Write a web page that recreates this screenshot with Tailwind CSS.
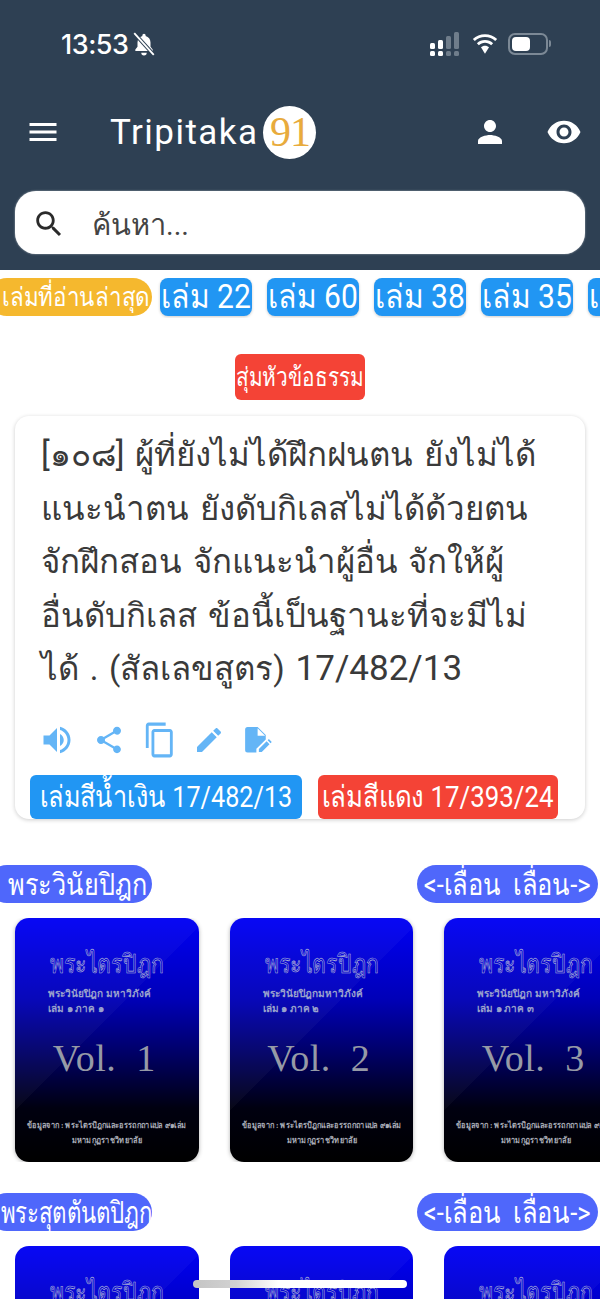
<!DOCTYPE html>
<html lang="th">
<head>
<meta charset="utf-8">
<script src="https://cdn.jsdelivr.net/npm/@tailwindcss/browser@4"></script>
</head>
<body>
<div class="relative w-[600px] h-[1299px] overflow-hidden bg-white font-['Roboto','Noto_Sans',sans-serif]">
  <header class="bg-[#2e4053] h-[270px] text-white flex flex-col">
    <div class="h-[88px] flex items-center pl-[61px] pr-[52px]">
      <span class="font-['Inter',sans-serif] font-medium text-[27px] leading-none tracking-[-0.5px]">13:53</span>
      <svg class="w-[26px] h-[26px] ml-[3px]" viewBox="0 0 24 24"><path fill="#fff" d="M12 2.500c-.8 0-1.500.7-1.500 1.500v.5C7.800 5.200 6 7.600 6 10.500v4L4 17v1.500h16V17l-2-2.500v-4c0-2.900-1.800-5.300-4.500-6v-.5c0-.8-.7-1.500-1.500-1.500zM9.500 20a2.500 2.500 0 0 0 5 0z"/><path d="M3 2l18 20" stroke="#2e4053" stroke-width="3.500"/><path d="M3 2l18 20" stroke="#fff" stroke-width="1.700"/></svg>
      <div class="ml-auto flex items-center">
        <svg class="w-[32px] h-[24px]" viewBox="0 0 32 24"><g fill="#fff"><rect x="1" y="11" width="5" height="6" rx="1.500"/><rect x="1" y="19" width="5" height="5" rx="1.500"/><rect x="9" y="8" width="5" height="9" rx="1.500"/><rect x="9" y="19" width="5" height="5" rx="1.500"/></g><g fill="#6f7d8b"><rect x="17" y="4" width="5" height="13" rx="1.500"/><rect x="17" y="19" width="5" height="5" rx="1.500"/><rect x="25" y="0" width="5" height="17" rx="1.500"/><rect x="25" y="19" width="5" height="5" rx="1.500"/></g></svg>
        <svg class="w-[28px] h-[22px] ml-[10px]" viewBox="0 0 24 19" fill="#fff"><path d="M12 3.500c3.400 0 6.500 1.300 8.800 3.500l1.700-1.800C19.700 2.600 16 1 12 1S4.300 2.600 1.500 5.200L3.200 7c2.300-2.200 5.400-3.500 8.800-3.500z"/><path d="M12 8.500c2 0 3.900.8 5.300 2.100l1.700-1.800C17.100 7 14.700 6 12 6S6.900 7 5 8.800l1.700 1.800C8.100 9.300 10 8.500 12 8.500z"/><path d="M12 11c-1.400 0-2.600.5-3.500 1.400L12 18l3.500-5.600c-.9-.9-2.100-1.400-3.500-1.400z"/></svg>
        <div class="ml-[9px] w-[40px] h-[22px] rounded-[7px] border-2 border-[#7c8996] p-[2px] relative">
          <div class="w-[18px] h-full bg-white rounded-[4px]"></div>
          <div class="absolute right-[-5px] top-[5px] w-[2px] h-[7px] bg-[#7c8996] rounded-r"></div>
        </div>
      </div>
    </div>
    <div class="h-[88px] flex items-center pl-[25px] pr-[18px]">
      <svg class="w-[36px] h-[36px]" viewBox="0 0 24 24" fill="#fff"><path d="M3 18h18v-2H3v2zm0-5h18v-2H3v2zm0-7v2h18V6H3z"/></svg>
      <span class="ml-[49px] text-[35px] leading-none tracking-[1.45px]">Tripitaka</span>
      <div class="ml-[5px] w-[53px] h-[53px] rounded-full bg-white flex items-center justify-center text-[#e8ab3c] font-['Liberation_Serif',serif] text-[42px] leading-none tracking-[-1px]">91</div>
      <svg class="ml-auto w-[36px] h-[36px]" viewBox="0 0 24 24" fill="#fff"><path d="M12 12c2.210 0 4-1.790 4-4s-1.790-4-4-4-4 1.790-4 4 1.790 4 4 4zm0 2c-2.670 0-8 1.340-8 4v2h16v-2c0-2.660-5.330-4-8-4z"/></svg>
      <svg class="ml-[38px] w-[36px] h-[36px]" viewBox="0 0 24 24" fill="#fff"><path d="M12 4.500C7 4.500 2.730 7.610 1 12c1.730 4.390 6 7.500 11 7.500s9.270-3.110 11-7.500c-1.730-4.390-6-7.500-11-7.500zM12 17c-2.760 0-5-2.240-5-5s2.240-5 5-5 5 2.240 5 5-2.240 5-5 5zm0-8c-1.660 0-3 1.340-3 3s1.340 3 3 3 3-1.340 3-3-1.340-3-3-3z"/></svg>
    </div>
    <div class="mx-[15px] mt-[15px] h-[63px] bg-white rounded-[21px] flex items-center pl-[17px] shadow-[0_0_2px_rgba(255,255,255,0.6)]">
      <svg class="w-[34px] h-[34px] mt-[2px]" viewBox="0 0 24 24" fill="#2a2a2a"><path d="M15.500 14h-.790l-.280-.270C15.410 12.590 16 11.110 16 9.500 16 5.910 13.090 3 9.500 3S3 5.910 3 9.500 5.910 16 9.500 16c1.610 0 3.090-.590 4.230-1.570l.270.280v.790l5 4.990L20.490 19l-4.990-5zm-6 0C7.010 14 5 11.990 5 9.500S7.010 5 9.500 5 14 7.010 14 9.500 11.990 14 9.500 14z"/></svg>
      <span class="ml-[26px] mt-[5px] text-[29px] leading-none text-[#444]">ค้นหา...</span>
    </div>
  </header>

  <div class="mt-[8px] flex overflow-hidden h-[40px] gap-[15px] text-white">
    <div class="-ml-[12px] mr-[-7px] w-[164px] h-[38px] shrink-0 rounded-full bg-[#f5b82e] text-[26px] flex items-center justify-center pl-[12px] whitespace-nowrap"><span class="inline-block shrink-0 scale-x-[0.86]">เล่มที่อ่านล่าสุด</span></div>
    <div class="w-[92px] h-[38px] shrink-0 rounded-[8px] bg-[#2196f3] text-[33px] flex items-center justify-center shadow-[0_1px_3px_rgba(0,0,0,0.2)] whitespace-nowrap"><span class="inline-block shrink-0 scale-x-[0.91]">เล่ม 22</span></div>
    <div class="w-[92px] h-[38px] shrink-0 rounded-[8px] bg-[#2196f3] text-[33px] flex items-center justify-center shadow-[0_1px_3px_rgba(0,0,0,0.2)] whitespace-nowrap"><span class="inline-block shrink-0 scale-x-[0.91]">เล่ม 60</span></div>
    <div class="w-[92px] h-[38px] shrink-0 rounded-[8px] bg-[#2196f3] text-[33px] flex items-center justify-center shadow-[0_1px_3px_rgba(0,0,0,0.2)] whitespace-nowrap"><span class="inline-block shrink-0 scale-x-[0.91]">เล่ม 38</span></div>
    <div class="w-[92px] h-[38px] shrink-0 rounded-[8px] bg-[#2196f3] text-[33px] flex items-center justify-center shadow-[0_1px_3px_rgba(0,0,0,0.2)] whitespace-nowrap"><span class="inline-block shrink-0 scale-x-[0.91]">เล่ม 35</span></div>
    <div class="w-[92px] h-[38px] shrink-0 rounded-[8px] bg-[#2196f3] text-[33px] flex items-center justify-center shadow-[0_1px_3px_rgba(0,0,0,0.2)] whitespace-nowrap"><span class="inline-block shrink-0 scale-x-[0.91]">เล่ม 11</span></div>
  </div>

  <div class="mt-[36px] mx-auto w-[130px] h-[46px] rounded-[6px] bg-[#f44336] text-white text-[26px] flex items-center justify-center whitespace-nowrap"><span class="inline-block shrink-0 scale-x-[0.8]">สุ่มหัวข้อธรรม</span></div>

  <section class="mt-[16px] mx-[15px] h-[403px] rounded-[14px] bg-white shadow-[0_1px_4px_rgba(0,0,0,0.2)] flex flex-col">
    <p class="mt-[12px] ml-[26px] text-[33px] leading-[53.500px] text-[#3a3a3a] whitespace-nowrap [word-spacing:2.500px]">[๑๐๘] ผู้ที่ยังไม่ได้ฝึกฝนตน ยังไม่ได้<br>แนะนำตน ยังดับกิเลสไม่ได้ด้วยตน<br>จักฝึกสอน จักแนะนำผู้อื่น จักให้ผู้<br>อื่นดับกิเลส ข้อนี้เป็นฐานะที่จะมีไม่<br>ได้ . (สัลเลขสูตร) <span class="text-[35px]">17/482/13</span></p>
    <div class="mt-[26px] ml-[24px] flex items-center h-[36px]">
      <svg class="w-[36px] h-[36px]" viewBox="0 0 24 24" fill="#64b5f6"><path d="M3 9v6h4l5 5V4L7 9H3zm13.500 3c0-1.770-1.020-3.290-2.500-4.030v8.050c1.480-.730 2.500-2.250 2.500-4.020zM14 3.230v2.060c2.890.860 5 3.540 5 6.710s-2.110 5.850-5 6.710v2.060c4.010-.910 7-4.490 7-8.770s-2.990-7.860-7-8.770z"/></svg>
      <svg class="ml-[18px] w-[32px] h-[32px]" viewBox="0 0 24 24" fill="#64b5f6"><path d="M18 16.080c-.760 0-1.440.300-1.960.770L8.910 12.700c.050-.230.090-.460.090-.700s-.040-.470-.090-.700l7.050-4.110c.540.500 1.250.810 2.040.810 1.660 0 3-1.340 3-3s-1.340-3-3-3-3 1.340-3 3c0 .240.040.470.090.700L8.040 9.810C7.500 9.310 6.790 9 6 9c-1.660 0-3 1.340-3 3s1.340 3 3 3c.790 0 1.500-.310 2.040-.810l7.120 4.160c-.050.210-.080.430-.080.650 0 1.610 1.310 2.920 2.920 2.920 1.610 0 2.920-1.310 2.920-2.920s-1.310-2.920-2.920-2.920z"/></svg>
      <svg class="ml-[18px] w-[34px] h-[38px]" viewBox="0 0 24 24" fill="#64b5f6" preserveAspectRatio="none"><path d="M16 1H4c-1.100 0-2 .9-2 2v14h2V3h12V1zm3 4H8c-1.100 0-2 .9-2 2v14c0 1.100.9 2 2 2h11c1.100 0 2-.9 2-2V7c0-1.100-.9-2-2-2zm0 16H8V7h11v14z"/></svg>
      <svg class="ml-[16px] w-[32px] h-[32px]" viewBox="0 0 24 24" fill="#64b5f6"><path d="M3 17.250V21h3.750L17.810 9.940l-3.750-3.750L3 17.250zM20.710 7.040c.390-.390.390-1.020 0-1.410l-2.340-2.340c-.390-.390-1.020-.390-1.410 0l-1.830 1.830 3.750 3.750 1.830-1.830z"/></svg>
      <svg class="ml-[17px] w-[30px] h-[32px]" viewBox="0 0 24 24" fill="#64b5f6"><path d="M4.500 1.500h8l6.500 6.500v3.500l-7.500 7.500v3H4.500a2 2 0 0 1-2-2v-16.500a2 2 0 0 1 2-2z"/><path fill="#fff" d="M12.500 2.500v6h6z"/><path d="M13.500 21.500v-2.300l6.200-6.200 2.300 2.300-6.200 6.200zM20.500 12.200l1-1 2.300 2.300-1 1z"/></svg>
    </div>
    <div class="mt-[17px] ml-[15px] flex gap-[16px] text-white text-[30px]">
      <div class="w-[272px] h-[44px] rounded-[6px] bg-[#2196f3] flex items-center justify-center whitespace-nowrap"><span class="inline-block shrink-0 scale-x-[0.84]">เล่มสีน้ำเงิน 17/482/13</span></div>
      <div class="w-[240px] h-[44px] rounded-[6px] bg-[#f44336] flex items-center justify-center whitespace-nowrap"><span class="inline-block shrink-0 scale-x-[0.86]">เล่มสีแดง 17/393/24</span></div>
    </div>
  </section>

  <section class="mt-[46px]">
    <div class="flex justify-between pr-[2px] text-white text-[30px]">
      <div class="-ml-[12px] w-[164px] h-[38px] rounded-full bg-[#4f67fb] flex items-center justify-center pl-[14px] whitespace-nowrap"><span class="inline-block shrink-0 scale-x-[0.84]">พระวินัยปิฎก</span></div>
      <div class="w-[181px] h-[38px] rounded-full bg-[#4f67fb] flex items-center justify-center whitespace-nowrap"><span class="inline-block shrink-0 scale-x-[0.85]">&lt;-เลื่อน&nbsp; เลื่อน-&gt;</span></div>
    </div>
    <div class="mt-[15px] pl-[15px] flex gap-[31px] overflow-hidden">
      <article class="w-[183.500px] h-[244px] shrink-0 rounded-[14px] overflow-hidden bg-[linear-gradient(135deg,rgba(255,255,255,0.03)_45%,transparent_45%),linear-gradient(to_bottom,#0000f5_0%,#0000b8_33%,#000068_55%,#000010_78%,#000_100%)] shadow-[0_1px_4px_rgba(0,0,0,0.3)] font-['Liberation_Serif',serif] text-center text-[#9aa2cc]">
        <div class="mt-[30px] text-[26px] leading-[34px] scale-x-[0.82] text-transparent [-webkit-text-stroke:0.6px_#b4bad8]">พระไตรปิฎก</div>
        <div class="mt-[4px] ml-[33px] text-left text-[10px] leading-[15px] font-bold whitespace-nowrap">พระวินัยปิฎก มหาวิภังค์<br>เล่ม ๑ ภาค ๑</div>
        <div class="mt-[20px] -ml-[5px] text-[38px] leading-[44px] tracking-[0.5px] text-[#969aa6] whitespace-pre">Vol.  1</div>
        <div class="mt-[38px] text-[8.500px] leading-[15px] font-bold text-[#a9acb6] whitespace-nowrap scale-x-[0.87]">ข้อมูลจาก : พระไตรปิฎกและอรรถกถาแปล ๙๑เล่ม<br>มหามกุฏราชวิทยาลัย</div>
      </article>
      <article class="w-[183.500px] h-[244px] shrink-0 rounded-[14px] overflow-hidden bg-[linear-gradient(135deg,rgba(255,255,255,0.03)_45%,transparent_45%),linear-gradient(to_bottom,#0000f5_0%,#0000b8_33%,#000068_55%,#000010_78%,#000_100%)] shadow-[0_1px_4px_rgba(0,0,0,0.3)] font-['Liberation_Serif',serif] text-center text-[#9aa2cc]">
        <div class="mt-[30px] text-[26px] leading-[34px] scale-x-[0.82] text-transparent [-webkit-text-stroke:0.6px_#b4bad8]">พระไตรปิฎก</div>
        <div class="mt-[4px] ml-[33px] text-left text-[10px] leading-[15px] font-bold whitespace-nowrap">พระวินัยปิฎกมหาวิภังค์<br>เล่ม ๑ ภาค ๒</div>
        <div class="mt-[20px] -ml-[5px] text-[38px] leading-[44px] tracking-[0.5px] text-[#969aa6] whitespace-pre">Vol.  2</div>
        <div class="mt-[38px] text-[8.500px] leading-[15px] font-bold text-[#a9acb6] whitespace-nowrap scale-x-[0.87]">ข้อมูลจาก : พระไตรปิฎกและอรรถกถาแปล ๙๑เล่ม<br>มหามกุฏราชวิทยาลัย</div>
      </article>
      <article class="w-[183.500px] h-[244px] shrink-0 rounded-[14px] overflow-hidden bg-[linear-gradient(135deg,rgba(255,255,255,0.03)_45%,transparent_45%),linear-gradient(to_bottom,#0000f5_0%,#0000b8_33%,#000068_55%,#000010_78%,#000_100%)] shadow-[0_1px_4px_rgba(0,0,0,0.3)] font-['Liberation_Serif',serif] text-center text-[#9aa2cc]">
        <div class="mt-[30px] text-[26px] leading-[34px] scale-x-[0.82] text-transparent [-webkit-text-stroke:0.6px_#b4bad8]">พระไตรปิฎก</div>
        <div class="mt-[4px] ml-[33px] text-left text-[10px] leading-[15px] font-bold whitespace-nowrap">พระวินัยปิฎก มหาวิภังค์<br>เล่ม ๑ ภาค ๓</div>
        <div class="mt-[20px] -ml-[5px] text-[38px] leading-[44px] tracking-[0.5px] text-[#969aa6] whitespace-pre">Vol.  3</div>
        <div class="mt-[38px] text-[8.500px] leading-[15px] font-bold text-[#a9acb6] whitespace-nowrap scale-x-[0.87]">ข้อมูลจาก : พระไตรปิฎกและอรรถกถาแปล ๙๑เล่ม<br>มหามกุฏราชวิทยาลัย</div>
      </article>
    </div>
  </section>

  <section class="mt-[31px]">
    <div class="flex justify-between pr-[2px] text-white text-[30px]">
      <div class="-ml-[12px] w-[164px] h-[38px] rounded-full bg-[#4f67fb] flex items-center justify-center pl-[12px] whitespace-nowrap"><span class="inline-block shrink-0 scale-x-[0.74]">พระสุตตันตปิฎก</span></div>
      <div class="w-[181px] h-[38px] rounded-full bg-[#4f67fb] flex items-center justify-center whitespace-nowrap"><span class="inline-block shrink-0 scale-x-[0.85]">&lt;-เลื่อน&nbsp; เลื่อน-&gt;</span></div>
    </div>
    <div class="mt-[15px] pl-[15px] flex gap-[31px] overflow-hidden">
      <article class="w-[183.500px] h-[244px] shrink-0 rounded-[14px] overflow-hidden bg-[linear-gradient(135deg,rgba(255,255,255,0.03)_45%,transparent_45%),linear-gradient(to_bottom,#0000f5_0%,#0000b8_33%,#000068_55%,#000010_78%,#000_100%)] font-['Liberation_Serif',serif] text-center"><div class="mt-[30px] text-[26px] leading-[34px] scale-x-[0.82] text-transparent [-webkit-text-stroke:0.6px_#b4bad8]">พระไตรปิฎก</div></article>
      <article class="w-[183.500px] h-[244px] shrink-0 rounded-[14px] overflow-hidden bg-[linear-gradient(135deg,rgba(255,255,255,0.03)_45%,transparent_45%),linear-gradient(to_bottom,#0000f5_0%,#0000b8_33%,#000068_55%,#000010_78%,#000_100%)] font-['Liberation_Serif',serif] text-center"><div class="mt-[30px] text-[26px] leading-[34px] scale-x-[0.82] text-transparent [-webkit-text-stroke:0.6px_#b4bad8]">พระไตรปิฎก</div></article>
      <article class="w-[183.500px] h-[244px] shrink-0 rounded-[14px] overflow-hidden bg-[linear-gradient(135deg,rgba(255,255,255,0.03)_45%,transparent_45%),linear-gradient(to_bottom,#0000f5_0%,#0000b8_33%,#000068_55%,#000010_78%,#000_100%)] font-['Liberation_Serif',serif] text-center"><div class="mt-[30px] text-[26px] leading-[34px] scale-x-[0.82] text-transparent [-webkit-text-stroke:0.6px_#b4bad8]">พระไตรปิฎก</div></article>
    </div>
  </section>

  <div class="absolute left-[193px] top-[1280px] w-[214px] h-[8px] rounded-full bg-[linear-gradient(to_right,#c4c4c4,#d2d2d2_20%,#fff_40%,#fff)]"></div>
</div>
</body>
</html>
